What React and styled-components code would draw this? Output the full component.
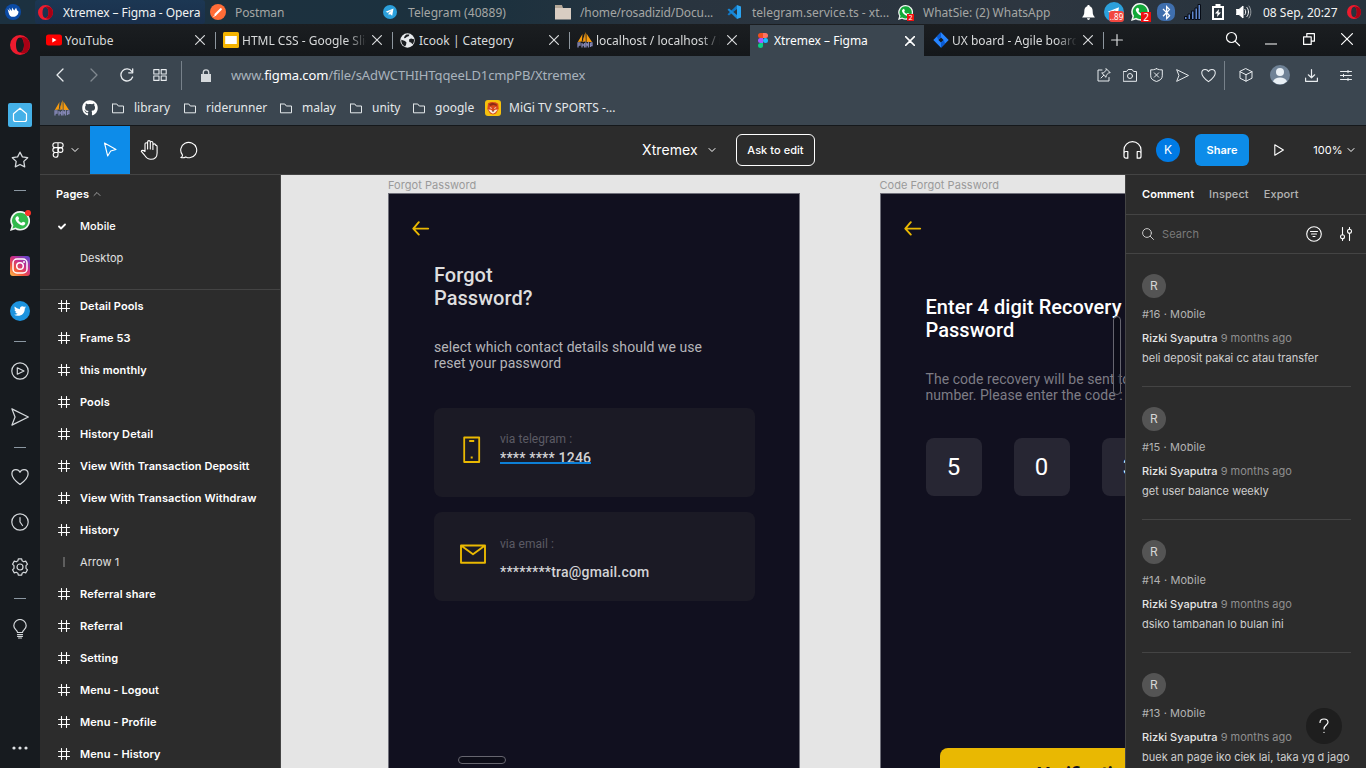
import React from 'react';
import styled, { createGlobalStyle, css } from 'styled-components';
import { FaTwitter, FaGithub, FaBluetoothB } from 'react-icons/fa';

const GlobalStyle = createGlobalStyle`
  * { box-sizing: border-box; }
  body { margin: 0; background: #171b1f; overflow: hidden; }
  svg { display: block; flex: none; }
`;

const SYSTEM_FONT = '"Noto Sans", sans-serif';
const UI_FONT = 'Inter, sans-serif';
const DESIGN_FONT = 'Roboto, sans-serif';

const Screen = styled.div`
  width: 1366px;
  height: 768px;
  display: flex;
  flex-direction: column;
  overflow: hidden;
  font-family: ${SYSTEM_FONT};
  white-space: nowrap;
`;

/* ---------- desktop task bar ---------- */

const TaskBar = styled.header`
  height: 24px;
  flex: none;
  display: flex;
  align-items: center;
  background: linear-gradient(90deg, #1c3140 0%, #1c313e 36%, #29343f 50%, #2d3640 75%, #27333d 100%);
  color: #a5a6a4;
  font-size: 12px;
`;

const StartButton = styled.div`
  width: 35px;
  padding-left: 5px;
  display: flex;
`;

const Task = styled.div`
  width: ${(p) => p.$w || 172}px;
  height: 24px;
  display: flex;
  align-items: center;
`;

const TaskInner = styled.div`
  width: 170px;
  height: 24px;
  display: flex;
  align-items: center;
  border-radius: 3px;
  background: ${(p) => (p.$active ? 'linear-gradient(#1c3753, #1a304c)' : 'transparent')};
  color: ${(p) => (p.$active ? '#f2f3f3' : 'inherit')};
`;

const TaskIcon = styled.span`
  width: 28px;
  padding-left: 3px;
  display: flex;
  flex: none;
`;

const Label = styled.span`
  letter-spacing: ${(p) => p.$track || 0}px;
  padding-bottom: ${(p) => p.$lift || 0}px;
`;

const Tray = styled.div`
  margin-left: auto;
  display: flex;
  align-items: center;
  color: #f4f4f4;
`;

const TraySlot = styled.div`
  width: 26px;
  height: 24px;
  display: flex;
  align-items: center;
  justify-content: center;
  position: relative;
  color: #fff;
`;

const CountBadge = styled.span`
  position: absolute;
  right: ${(p) => p.$right ?? 1}px;
  bottom: ${(p) => p.$bottom ?? 2}px;
  width: ${(p) => p.$w}px;
  height: ${(p) => p.$h}px;
  border-radius: ${(p) => p.$r || 0}px;
  background: ${(p) => p.$bg || '#ef1111'};
  color: #fff;
  font-size: ${(p) => p.$size || 8}px;
  line-height: ${(p) => p.$h}px;
  text-align: center;
`;

const Clock = styled.div`
  padding-left: 6px;
  width: 85px;
`;

const TrayOpera = styled.div`
  width: 24px;
  display: flex;
  justify-content: center;
`;

const RoundLogo = styled.span`
  width: ${(p) => p.$size}px;
  height: ${(p) => p.$size}px;
  border-radius: ${(p) => p.$radius || '50%'};
  background: ${(p) => p.$bg || 'none'};
  color: #fff;
  display: flex;
  align-items: center;
  justify-content: center;
  flex: none;
  position: relative;
`;

/* ---------- browser window ---------- */

const Window = styled.div`
  flex: 1;
  display: flex;
  min-height: 0;
`;

const OperaBar = styled.nav`
  width: 40px;
  flex: none;
  display: flex;
  flex-direction: column;
  align-items: center;
  background: #171b1f;
  color: #d5d9dc;
`;

const OperaItem = styled.div`
  width: 40px;
  height: ${(p) => p.$h}px;
  display: flex;
  align-items: center;
  justify-content: center;
`;

const OperaDash = styled.i`
  width: 12px;
  height: 1px;
  background: #8b97a1;
`;

const SideGap = styled.div`
  flex: 1;
`;

const HomeTile = styled.span`
  width: 24px;
  height: 24px;
  border-radius: 2px;
  background: #45b1e8;
  color: #fff;
  display: flex;
  align-items: center;
  justify-content: center;
`;

const RedDot = styled.i`
  position: absolute;
  right: -1px;
  top: -1px;
  width: 6px;
  height: 6px;
  border-radius: 50%;
  background: #fb3228;
`;

const Browser = styled.div`
  flex: 1;
  min-width: 0;
  display: flex;
  flex-direction: column;
`;

const TabStrip = styled.div`
  height: 32px;
  flex: none;
  display: flex;
  align-items: center;
  background: linear-gradient(#1b1e21, #14171a);
  color: #d8dadb;
  font-size: 12px;
`;

const Tab = styled.div`
  width: ${(p) => p.$w || 177}px;
  height: 32px;
  padding-left: ${(p) => p.$pad ?? 7}px;
  padding-right: ${(p) => p.$end ?? 10}px;
  display: flex;
  align-items: center;
  flex: none;
  background: ${(p) => (p.$active ? '#3b4650' : 'transparent')};
  color: ${(p) => (p.$active ? '#fff' : 'inherit')};
  margin-top: ${(p) => (p.$active ? 1 : 0)}px;
`;

const TabIcon = styled.span`
  width: ${(p) => p.$w || 19}px;
  display: flex;
  flex: none;
`;

const TabTitle = styled.span`
  width: 124px;
  overflow: hidden;
  flex: none;
  ${(p) => p.$fade && css`
    mask-image: linear-gradient(90deg, #000 84%, transparent 101%);
  `}
`;

const CloseSlot = styled.span`
  margin-left: auto;
  display: flex;
`;

const TabRule = styled.i`
  width: 1px;
  height: 17px;
  background: #8d969e;
  flex: none;
`;

const WindowButtons = styled.div`
  margin-left: auto;
  padding-bottom: 2px;
  display: flex;
  align-items: center;
  color: #fff;
`;

const WindowButton = styled.span`
  width: ${(p) => p.$w || 38}px;
  display: flex;
  justify-content: center;
`;

const AddressRow = styled.div`
  height: 38px;
  flex: none;
  display: flex;
  align-items: center;
  background: #3b4650;
  color: #e8ecef;
`;

const AddressIcon = styled.span`
  width: ${(p) => p.$w}px;
  display: flex;
  justify-content: center;
  opacity: ${(p) => (p.$dim ? 0.4 : 1)};
`;

const AddressRule = styled.i`
  width: 1px;
  height: 29px;
  background: #77818a;
`;

const Url = styled.div`
  padding-left: 1px;
  font-size: 13px;
  color: #a9b3bd;
  letter-spacing: -0.11px;
  b { font-weight: 400; color: #fff; }
`;

const AddressActions = styled.div`
  margin-left: auto;
  display: flex;
  align-items: center;
`;

const BookmarkRow = styled.div`
  height: 32px;
  flex: none;
  display: flex;
  align-items: center;
  padding: 0 0 4px 14px;
  background: #3b4650;
  border-bottom: 1px solid #15181b;
  color: #e4e8ea;
  font-size: 12px;
`;

const Bookmark = styled.div`
  display: flex;
  align-items: center;
  gap: ${(p) => p.$gap ?? 10}px;
  width: ${(p) => p.$w}px;
  padding-top: 1px;
`;

/* ---------- Figma ---------- */

const Figma = styled.div`
  flex: 1;
  min-height: 0;
  display: flex;
  flex-direction: column;
  font-family: ${UI_FONT};
  font-size: 11px;
  letter-spacing: 0.05px;
  color: #fff;
`;

const Toolbar = styled.div`
  height: 49px;
  flex: none;
  display: flex;
  align-items: center;
  background: #2c2c2c;
  border-bottom: 1px solid #444;
`;

const ToolSide = styled.div`
  width: 561px;
  height: 48px;
  display: flex;
  align-items: center;
`;

const Tool = styled.div`
  width: ${(p) => p.$w || 40}px;
  height: 48px;
  padding-right: ${(p) => p.$shift || 0}px;
  display: flex;
  align-items: center;
  justify-content: center;
  gap: 7px;
  background: ${(p) => (p.$active ? '#0d8ce9' : 'transparent')};
`;

const FileTitle = styled.div`
  flex: 1;
  display: flex;
  align-items: center;
  padding-left: 41px;
  font-size: 14px;
  letter-spacing: 0.1px;
`;

const TitleText = styled.span`
  width: 66px;
  padding-bottom: 2px;
`;

const AskButton = styled.button`
  width: 79px;
  height: 32px;
  margin: 0 0 0 20px;
  padding: 0;
  border: 1px solid #fff;
  border-radius: 6px;
  background: none;
  color: #fff;
  font: 500 11px ${UI_FONT};
  letter-spacing: 0.05px;
`;

const ToolbarRight = styled.div`
  display: flex;
  align-items: center;
  height: 48px;
`;

const RightSlot = styled.div`
  width: ${(p) => p.$w}px;
  display: flex;
  align-items: center;
  justify-content: center;
`;

const Avatar = styled.span`
  width: 24px;
  height: 24px;
  border-radius: 50%;
  background: ${(p) => p.$bg || '#545454'};
  color: ${(p) => (p.$bg ? '#fff' : '#d6d6d6')};
  font-size: 12px;
  line-height: 24px;
  text-align: center;
`;

const ShareButton = styled.button`
  width: 54px;
  height: 32px;
  margin: 0 0 0 15px;
  padding: 0;
  border: 0;
  border-radius: 6px;
  background: #0d8ce9;
  color: #fff;
  font: 600 11px ${UI_FONT};
`;

const Workspace = styled.div`
  flex: 1;
  min-height: 0;
  display: flex;
`;

const LeftPanel = styled.aside`
  width: 241px;
  flex: none;
  background: #2c2c2c;
  border-right: 1px solid #444;
  overflow: hidden;
`;

const PagesSection = styled.div`
  height: 115px;
  padding-top: 3px;
  border-bottom: 1px solid #444;
`;

const PagesHeader = styled.div`
  height: 32px;
  display: flex;
  align-items: center;
  gap: 4px;
  padding-left: 16px;
  font-weight: 600;
`;

const LayerRow = styled.div`
  height: 32px;
  display: flex;
  align-items: center;
  font-weight: ${(p) => p.$weight || 600};
  letter-spacing: ${(p) => (p.$weight ? 0.05 : 0.09)}px;
  color: ${(p) => (p.$soft ? '#e0e0e0' : '#fff')};
`;

const LayerIcon = styled.span`
  width: 40px;
  padding-left: 18px;
  display: flex;
`;

const ArrowMark = styled.i`
  width: 2px;
  height: 10px;
  margin-left: 5px;
  background: #5e5e5e;
`;

const Canvas = styled.main`
  flex: 1;
  position: relative;
  overflow: hidden;
  background: #e5e5e5;
`;

const Artboard = styled.section`
  position: absolute;
  left: ${(p) => p.$x}px;
  top: 4px;
  width: 412px;
  height: 700px;
  display: flex;
  flex-direction: column;
`;

const ArtboardName = styled.div`
  height: 14px;
  line-height: 13px;
  color: #9a9a9a;
`;

const Phone = styled.div`
  flex: 1;
  border: 1px solid #70707a;
  background: #11101f;
  padding: 27px 0 0 23px;
  font-family: ${DESIGN_FONT};
  letter-spacing: 0;
`;

const PhoneBody = styled.div`
  padding: ${(p) => p.$top}px 0 0 22px;
`;

const Heading = styled.h1`
  margin: 0;
  font-size: 20px;
  line-height: 23px;
  font-weight: 500;
  color: ${(p) => p.$color};
  letter-spacing: 0.04px;
`;

const Copy = styled.p`
  margin: 29px 0 0;
  font-size: 14px;
  line-height: 16px;
  color: ${(p) => p.$color};
  letter-spacing: 0.05px;
`;

const ContactCard = styled.div`
  width: 320.500px;
  height: 89px;
  margin-top: ${(p) => p.$top}px;
  padding-left: ${(p) => p.$pad}px;
  border-radius: 8px;
  background: #1b1a25;
  display: flex;
`;

const ContactIcon = styled.span`
  width: ${(p) => p.$w}px;
  padding-top: ${(p) => p.$top}px;
`;

const ContactText = styled.div`
  display: flex;
  flex-direction: column;
  align-items: flex-start;
  padding-top: ${(p) => p.$top}px;
`;

const Via = styled.span`
  font-size: 12px;
  line-height: 16px;
  color: #5b5a64;
  letter-spacing: 0.06px;
`;

const ContactValue = styled.span`
  margin-top: ${(p) => p.$gap}px;
  height: 17px;
  font-size: 14px;
  line-height: 17px;
  font-weight: 500;
  color: #d3d3d6;
  letter-spacing: 0.2px;
  ${(p) => p.$selected && css`
    line-height: 23px;
    overflow: hidden;
    border-bottom: 2px solid #0d7fd6;
  `}
`;

const DigitRow = styled.div`
  display: flex;
  gap: 32px;
  margin-top: 35px;
`;

const Digit = styled.span`
  width: 56px;
  height: 58px;
  flex: none;
  border-radius: 8px;
  background: #272633;
  color: #fff;
  font-size: 24px;
  line-height: 58px;
  text-align: center;
`;

const VerifyButton = styled.div`
  width: 292px;
  height: 48px;
  margin: 252px 0 0 14px;
  border-radius: 8px;
  background: #e9b802;
  color: #11101f;
  font-size: 18.500px;
  font-weight: 700;
  line-height: 53px;
  text-align: center;
`;

const ScrollPill = styled.i`
  position: absolute;
  left: ${(p) => p.$x}px;
  top: ${(p) => p.$y}px;
  width: ${(p) => p.$w}px;
  height: ${(p) => p.$h}px;
  border: 1px solid #66656f;
  border-radius: 4px;
  background: rgba(10, 9, 18, 0.5);
`;

const RightPanel = styled.aside`
  width: 241px;
  flex: none;
  background: #2c2c2c;
  border-left: 1px solid #444;
  overflow: hidden;
  position: relative;
`;

const PanelTabs = styled.div`
  height: 40px;
  display: flex;
  align-items: center;
  gap: 15px;
  padding: 0 0 2px 16px;
  border-bottom: 1px solid #444;
  color: #b3b3b3;
  font-weight: 500;
  letter-spacing: 0.1px;
  b { font-weight: 600; color: #fff; letter-spacing: 0.05px; }
`;

const SearchRow = styled.div`
  height: 39px;
  display: flex;
  align-items: center;
  padding: 0 14px 0 16px;
  border-bottom: 1px solid #444;
`;

const SearchHint = styled.span`
  flex: 1;
  padding-left: 8px;
  color: #7a7a7a;
  letter-spacing: 0.1px;
`;

const SearchTools = styled.span`
  display: flex;
  align-items: center;
  gap: 18px;
`;

const Comment = styled.article`
  height: 133px;
  margin: 0 15px 0 16px;
  padding-top: 20px;
  border-bottom: 1px solid #444;
  display: flex;
  flex-direction: column;
  color: #b3b3b3;
`;

const CommentRef = styled.div`
  margin-top: 8px;
  line-height: 16px;
  letter-spacing: 0.08px;
`;

const CommentBy = styled.div`
  margin-top: 8px;
  line-height: 16px;
  color: #8f8f8f;
  letter-spacing: 0;
  b { font-weight: 500; color: #e6e6e6; letter-spacing: 0.03px; }
`;

const CommentText = styled.div`
  margin-top: 4px;
  line-height: 16px;
  color: #cfcfcf;
  letter-spacing: 0.01px;
`;

const HelpButton = styled.span`
  position: absolute;
  right: 24px;
  bottom: 24px;
  width: 36px;
  height: 36px;
  border-radius: 50%;
  background: #1e1e1e;
  display: flex;
  align-items: center;
  justify-content: center;
`;

/* ---------- icons ---------- */

const Icon = ({ w = 16, h = w, sw = 1, children }) => (
  <svg width={w} height={h} viewBox={`0 0 ${w} ${h}`} fill="none" stroke="currentColor" strokeWidth={sw} strokeLinecap="round" strokeLinejoin="round">
    {children}
  </svg>
);

const OperaLogo = ({ size }) => (
  <svg width={size} height={size} viewBox="0 0 20 20">
    <path fillRule="evenodd" fill="#ee1b2e" d="M10 0a10 10 0 1 0 0 20 10 10 0 0 0 0-20Zm0 2.600c2.500 0 4 3.200 4 7.400s-1.500 7.400-4 7.400S6 14.200 6 10s1.500-7.400 4-7.400Z" />
    <path fill="#a70014" d="M10 2.600c3.500-1.600 6.200.2 7.500 1.500C21 8 20.500 13 17 17c-2 1.700-5 2-7 .4 2.500 0 4-3.200 4-7.400s-1.500-7.400-4-7.400Z" />
  </svg>
);

const MouseLogo = () => (
  <svg width="16" height="16" viewBox="0 0 16 16">
    <circle cx="8" cy="8" r="8" fill="#0b4ba5" />
    <path fill="#fff" d="M2.600 5 4.800 7.200 4.300 4l2.500 3L7 3.600l2.200 2.800 1.900-2.600 1 2.700c1.600.3 1.800 1.800.8 3.700-1.600 2.600-5.400 3.400-7.700 1.700C3.900 10.800 3.400 7.800 2.600 5Z" />
  </svg>
);

const PostmanLogo = () => (
  <Icon w={16}>
    <circle cx="8" cy="8" r="8" fill="#ff6c37" stroke="none" />
    <path d="m5.500 10.500 5.300-5.300" stroke="#fff" strokeWidth="2.200" />
    <path d="m3.800 12.300 2-1" stroke="#fff" />
  </Icon>
);

const TelegramLogo = ({ size = 14 }) => (
  <svg width={size} height={size} viewBox="0 0 16 16">
    <circle cx="8" cy="8" r="8" fill="#2ba0dc" />
    <path fill="#fff" d="m3 7.800 9-3.700-1.500 8.200-2.600-1.900-1.300 1.300-.3-2.300 3.500-3.300-4.400 2.700Z" />
  </svg>
);

const FolderLogo = () => (
  <svg width="16" height="16" viewBox="0 0 16 16">
    <path fill="#b5a898" d="M0 1h7l1 3H0Z" />
    <path fill="#d9cdc2" d="M0 4h16v11.500H0Z" />
  </svg>
);

const CodeLogo = () => (
  <svg width="14" height="14" viewBox="0 0 14 14">
    <path fill="#1177c4" d="M10 0v4L2 10.500.5 9.300 10 0Z" />
    <path fill="#1888d8" d="M10 14v-4L2 3.500.5 4.700 10 14Z" />
    <path fill="#2aa4f2" d="m10 0 4 1.500v11L10 14Z" />
  </svg>
);

const WhatsLogo = ({ size = 16, green = '#12a838' }) => (
  <svg width={size} height={size} viewBox="0 0 20 20">
    <path fill="#f1f5f2" d="M10.200 0A9.800 9.800 0 1 1 5.400 18.300L0 19.900l1.600-5.200A9.800 9.800 0 0 1 10.200 0Z" />
    <path fill={green} d="M10.200 1.700a8.100 8.100 0 1 1-4.500 14.800l-3.200.9.900-3.100a8.100 8.100 0 0 1 6.800-12.600Z" />
    <path fill="#fff" d="M7.300 5.200c.5-.1.900 0 1.100.6l.7 1.600c.1.600-.8 1.200-.8 1.500.8 1.500 1.800 2.300 3.300 2.900.5 0 .9-1.300 1.500-1.100l1.900.9c.4.300.2 1.500-.2 2-1.300 1.300-3 .9-4.700.1-2-1-3.600-2.800-4.500-4.700-.7-1.600.2-3.400 1.700-3.800Z" />
  </svg>
);

const YoutubeLogo = () => (
  <svg width="16" height="16" viewBox="0 0 16 16">
    <rect y="2.500" width="16" height="11" rx="2.500" fill="#f00" />
    <path fill="#fff" d="m6.300 5.700 4.200 2.300-4.200 2.400Z" />
  </svg>
);

const SlidesLogo = () => (
  <svg width="16" height="16" viewBox="0 0 16 16">
    <rect width="16" height="16" rx="1.500" fill="#f5b400" />
    <rect x="2.200" y="4" width="11.600" height="8" fill="#fff" />
  </svg>
);

const GlobeLogo = () => (
  <svg width="15" height="15" viewBox="0 0 15 15">
    <circle cx="7.500" cy="7.500" r="7.200" fill="#e8eaed" />
    <path fill="#1b1e21" d="M1.300 6.700 5 8l1.500 1.500L6 12l-1 1.500C2.300 12.300 1 9.500 1.300 6.700ZM6.500 1.500l2.800-.1c-.1 1.400-1 2.200-2.300 2.300L5.500 5 4 5.200c.3-1.700 1-3 2.500-3.700ZM9 6.500l2-1 3 .8c.2 2-.3 3.700-1.500 5L11 9.500 9.300 9Z" />
  </svg>
);

const SailLogo = () => (
  <svg width="16" height="16" viewBox="0 0 16 16">
    <path fill="#f89c0e" d="M5.500 2 4.800 9.500.8 10Zm3-2 .3 9.500-3.300.3Zm1 1.500L15 10H9.500Z" />
    <path fill="#c9821d" d="m8.500 0-3 9.800 1.300-.1Z" />
    <path stroke="#8486b4" strokeWidth="1.300" fill="none" d="M1 15.500V11h2v2H1m4-2v4.500m2.500-4.500v4.500M5 13h2.500m1.500 2.500V11l1.200 2 1.200-2v4.500M13.500 11v4m0-4H15v2.500h-1.500" />
  </svg>
);

const FigmaLogo = () => (
  <svg width="10" height="15" viewBox="0 0 10 15">
    <path fill="#f24e1e" d="M5 0H2.500a2.500 2.500 0 0 0 0 5H5Z" />
    <path fill="#ff7262" d="M5 0h2.500a2.500 2.500 0 0 1 0 5H5Z" />
    <path fill="#a259ff" d="M5 5H2.500a2.500 2.500 0 0 0 0 5H5Z" />
    <circle cx="7.500" cy="7.500" r="2.500" fill="#1abcfe" />
    <path fill="#0acf83" d="M5 10H2.500A2.500 2.500 0 1 0 5 12.500Z" />
  </svg>
);

const JiraLogo = () => (
  <svg width="16" height="16" viewBox="0 0 16 16">
    <path fill="#2684ff" fillRule="evenodd" d="m8 .3 7.700 7.700L8 15.700.3 8ZM8 5.400 5.400 8 8 10.600 10.600 8Z" />
    <path fill="#0a5bd3" d="M8 .3v5.100L5.400 8 3.800 4.500ZM8 15.700v-5.100L10.600 8l1.600 3.500Z" />
  </svg>
);

const FoxLogo = () => (
  <svg width="16" height="16" viewBox="0 0 16 16">
    <rect width="16" height="16" rx="3" fill="#f6c10d" />
    <path fill="#d9481c" d="M3 3.200 6 2l4.500.2 2.700 1.500.5 5L11 13.500 8 14.500l-3-1L2.300 9Z" />
    <path fill="#8c2a14" d="m4 4 3.500-1.200L11.500 4 12 6 8.500 5 5 6Z" />
    <path fill="#fbe9d6" d="m3.200 9.500 2.500.2L8 11.200l2.300-1.500 2.500-.2-2.500 3L8 13.800l-2.300-1.300Z" />
    <path fill="#fff" d="m4.500 7 2.300 1-.6.9Zm7 0L9.200 8l.6.900Z" />
    <path fill="#3c1b12" d="M7 10.800h2l-1 1.200Z" />
  </svg>
);

const InstagramLogo = () => (
  <svg width="20" height="20" viewBox="0 0 20 20">
    <defs>
      <linearGradient id="insta" x1="0" y1="1" x2=".8" y2="0">
        <stop offset="0" stopColor="#fdc14d" /><stop offset=".35" stopColor="#f0543c" />
        <stop offset=".65" stopColor="#c92f8b" /><stop offset="1" stopColor="#6a45c9" />
      </linearGradient>
    </defs>
    <rect width="20" height="20" rx="3" fill="url(#insta)" />
    <rect x="3" y="3" width="14" height="14" rx="4" fill="none" stroke="#fff" strokeWidth="1.500" />
    <circle cx="10" cy="10" r="3.300" fill="none" stroke="#fff" strokeWidth="1.500" />
    <circle cx="14" cy="6" r="1" fill="#fff" />
  </svg>
);

const Cross = ({ size = 10, sw = 1.2 }) => (
  <Icon w={size} sw={sw}><path d={`M.6.6 ${size - 0.6} ${size - 0.6}M${size - 0.6} .6 .6 ${size - 0.6}`} /></Icon>
);

const Heart = ({ w = 16, sw = 1.1 }) => (
  <svg width={w} height={w} viewBox="0 0 16 16" fill="none" stroke="currentColor" strokeWidth={sw} strokeLinejoin="round">
    <path d="M8 14.600C3.500 11.300.8 8.500.8 5.300.8 3 2.400 1.500 4.400 1.500 6 1.500 7.300 2.300 8 3.800c.7-1.500 2-2.300 3.600-2.300 2 0 3.600 1.500 3.600 3.800 0 3.200-2.700 6-7.200 9.300Z" />
  </svg>
);

const SendIcon = ({ w = 14, sw = 1.1 }) => (
  <svg width={w} height={w} viewBox="0 0 16 16" fill="none" stroke="currentColor" strokeWidth={sw} strokeLinejoin="round">
    <path d="M.8.800 15.400 8 .8 15.200 3.600 8Z" />
  </svg>
);

const BookmarkFolder = () => (
  <Icon w={12} h={11}><path d="M.5 1.500v8.300h11V3H6.300L4.800 1H.5Z" /></Icon>
);

const ChevronDown = () => <Icon w={8} h={6}><path d="m1 1.500 3 3 3-3" /></Icon>;

const FrameIcon = () => (
  <Icon w={12} sw={1.1}><path d="M3.500.5v11m5-11v11M.5 3.500h11m-11 5h11" /></Icon>
);

const BackArrow = () => (
  <svg width="18" height="16" viewBox="0 0 18 16" fill="none" stroke="#e9b802" strokeWidth="1.900" strokeLinecap="round" strokeLinejoin="round">
    <path d="M16.200 7.600H1.500M6.800 1.200 1.300 7.600l5.500 6" />
  </svg>
);

/* ---------- data ---------- */

const TASKS = [
  { text: 'Xtremex – Figma - Opera', icon: <OperaLogo size={15} />, active: true, track: -0.07 },
  { text: 'Postman', icon: <PostmanLogo />, track: -0.1, w: 173 },
  { text: 'Telegram (40889)', icon: <TelegramLogo />, track: 0.05 },
  { text: '/home/rosadizid/Docu...', icon: <FolderLogo />, track: -0.12 },
  { text: 'telegram.service.ts - xt...', icon: <CodeLogo />, w: 171 },
];

const TABS = [
  { text: 'YouTube', icon: <YoutubeLogo />, w: 175, pad: 6 },
  { text: 'HTML CSS - Google Slides', icon: <SlidesLogo />, fade: true, w: 176 },
  { text: 'Icook | Category', icon: <GlobeLogo />, w: 176 },
  { text: 'localhost / localhost / internal', icon: <SailLogo />, fade: true, w: 180, end: 13 },
];

const BOOKMARKS = [
  ['library', 72], ['riderunner', 96], ['malay', 70], ['unity', 63], ['google', 72],
];

const LAYERS = [
  'Detail Pools', 'Frame 53', 'this monthly', 'Pools', 'History Detail',
  'View With Transaction Depositt', 'View With Transaction Withdraw', 'History',
  null, 'Referral share', 'Referral', 'Setting', 'Menu - Logout', 'Menu - Profile', 'Menu - History',
];

const COMMENTS = [
  [16, 'beli deposit pakai cc atau transfer'],
  [15, 'get user balance weekly'],
  [14, 'dsiko tambahan lo bulan ini'],
  [13, 'buek an page iko ciek lai, taka yg d jago'],
];

const SIDE_ITEMS = [
  [42, <OperaLogo size={20} />],
  [27, null],
  [44, <HomeTile><Icon w={16} sw={1.2}><path d="M1.500 6.800 8 1.200l6.500 5.600v5.700q0 2-2 2h-9q-2 0-2-2Z" /></Icon></HomeTile>],
  [46, <Icon w={18} sw={1.3}><path d="m9 1.200 2.400 4.700 5.300.8-3.900 3.700.9 5.400L9 13.500l-4.700 2.300.9-5.400-3.900-3.700 5.300-.8Z" /></Icon>],
  [14, <OperaDash />],
  [48, <RoundLogo $size={20}><WhatsLogo size={20} green="#32b94c" /><RedDot /></RoundLogo>],
  [42, <InstagramLogo />],
  [48, <RoundLogo $size={20} $bg="#1c93de"><FaTwitter size={12} /></RoundLogo>],
  [12, <OperaDash />],
  [48, <Icon w={18} sw={1.2}><circle cx="9" cy="9" r="8.200" /><path d="M6.300 5.800v6.400L13 9Z" /></Icon>],
  [44, <SendIcon w={18} />],
  [16, <OperaDash />],
  [44, <Heart w={18} />],
  [46, <Icon w={18} sw={1.2}><circle cx="9" cy="9" r="8.200" /><path d="M9 4.500V9l2.500 3.500" /></Icon>],
  [44, <Icon w={18} sw={1.2}><path d="m7.300.8-.4 2-1.600 1-2-.7L1.500 6.200 3 7.700v2.600l-1.500 1.500 1.800 3.100 2-.7 1.600 1 .4 2h3.400l.4-2 1.600-1 2 .7 1.800-3.100-1.500-1.500V7.700l1.500-1.500-1.800-3.100-2 .7-1.600-1-.4-2Z" /><circle cx="9" cy="9" r="3" /></Icon>],
  [18, <OperaDash />],
  [44, <Icon w={14} h={20} sw={1.2}><path d="M4.500 13.500C4.500 11 .8 10.500.8 6.700a6.200 6.200 0 0 1 12.400 0c0 3.800-3.700 4.300-3.700 6.800ZM4.500 15.500h5M4.500 17.300h5M5.500 19h3" /></Icon>],
];

/* ---------- sections ---------- */

const DesktopBar = () => (
  <TaskBar>
    <StartButton><MouseLogo /></StartButton>
    {TASKS.map((t) => (
      <Task key={t.text} $w={t.w}>
        <TaskInner $active={t.active}><TaskIcon>{t.icon}</TaskIcon><Label $track={t.track}>{t.text}</Label></TaskInner>
      </Task>
    ))}
    <Task>
      <TaskIcon>
        <RoundLogo $size={15}><WhatsLogo size={15} /><CountBadge $w={7} $h={7} $right={-1} $bottom={-1} $size={7}>2</CountBadge></RoundLogo>
      </TaskIcon>
      <Label>WhatSie: (2) WhatsApp</Label>
    </Task>
    <Tray>
      <TraySlot>
        <svg width="13" height="15" viewBox="0 0 13 15"><path fill="#fff" d="M6.500 0c.8 0 1.200.5 1.200 1.200C10 2 10.700 3.800 10.700 6.500c0 3 .7 4 2 5.500v.6H.3V12c1.300-1.500 2-2.500 2-5.500 0-2.700.7-4.500 3-5.300C5.300.5 5.700 0 6.500 0ZM5 13.300h3c-.2 2.200-2.800 2.200-3 0Z" /></svg>
      </TraySlot>
      <TraySlot><TelegramLogo size={20} /><CountBadge $w={15} $h={11} $r={3} $bg="#f2473f" $right={3} $bottom={2}>..89</CountBadge></TraySlot>
      <TraySlot><WhatsLogo size={18} /><CountBadge $w={10} $h={10} $size={10} $right={2} $bottom={2}>2</CountBadge></TraySlot>
      <TraySlot><RoundLogo $size={18} $radius="7px" $bg="#3f6fae"><FaBluetoothB size={15} /></RoundLogo></TraySlot>
      <TraySlot>
        <svg width="17" height="16" viewBox="0 0 17 16" fill="#5f86cc" stroke="#060b14" strokeWidth="1">
          <path d="M.5 12.500H3v3H.5ZM4 10h2.500v5.500H4ZM7.500 7H10v8.500H7.500ZM11 4h2.500v11.500H11ZM14 .5h2.500v15H14Z" />
        </svg>
      </TraySlot>
      <TraySlot>
        <svg width="12" height="16" viewBox="0 0 12 16"><path fill="none" stroke="#fff" strokeWidth="2" d="M1 3h10v12H1Z" /><path fill="#fff" d="M3.500 0h5v3h-5ZM7 5l-4 4.500h2.500L5 13l4-4.500H6.500Z" /></svg>
      </TraySlot>
      <TraySlot>
        <Icon w={16} h={14}><path d="M.5 4.500H3L7 1v12L3 9.500H.5Z" fill="#fff" /><path d="M9 4.500c1 1.500 1 3.500 0 5M11 2.500c2 2.500 2 6.500 0 9" /><path d="M13 1c2.500 3.500 2.500 8.500 0 12" opacity=".5" /></Icon>
      </TraySlot>
      <Clock>08 Sep, 20:27</Clock>
      <TrayOpera><OperaLogo size={14} /></TrayOpera>
    </Tray>
  </TaskBar>
);

const Sidebar = () => (
  <OperaBar>
    {SIDE_ITEMS.map(([h, node], i) => <OperaItem key={i} $h={h}>{node}</OperaItem>)}
    <SideGap />
    <OperaItem $h={40}>
      <svg width="16" height="4" viewBox="0 0 16 4" fill="#dfe2e4"><circle cx="2" cy="2" r="1.600" /><circle cx="8" cy="2" r="1.600" /><circle cx="14" cy="2" r="1.600" /></svg>
    </OperaItem>
  </OperaBar>
);

const BrowserTabs = () => (
  <TabStrip>
    {TABS.map((t, i) => (
      <React.Fragment key={t.text}>
        <Tab $w={t.w} $pad={t.pad} $end={t.end}>
          <TabIcon>{t.icon}</TabIcon>
          <TabTitle $fade={t.fade}>{t.text}</TabTitle>
          <CloseSlot><Cross /></CloseSlot>
        </Tab>
        {i < 3 && <TabRule />}
      </React.Fragment>
    ))}
    <Tab $w={174} $active $pad={8} $end={9}>
      <TabIcon $w={16}><FigmaLogo /></TabIcon>
      <TabTitle>Xtremex – Figma</TabTitle>
      <CloseSlot><Cross sw={1.5} /></CloseSlot>
    </Tab>
    <Tab $w={179} $pad={9}>
      <TabIcon><JiraLogo /></TabIcon>
      <TabTitle $fade>UX board - Agile board - Jira</TabTitle>
      <CloseSlot><Cross /></CloseSlot>
    </Tab>
    <TabRule />
    <WindowButton $w={26}><Icon w={12} sw={1.2}><path d="M6 .6v10.800M.6 6h10.800" /></Icon></WindowButton>
    <WindowButtons>
      <WindowButton><Icon w={16} sw={1.2}><circle cx="6.500" cy="6.500" r="5" /><path d="m10.300 10.300 4.200 4.200" /></Icon></WindowButton>
      <WindowButton><Icon w={12} h={12} sw={1.2}><path d="M.5 11h11" /></Icon></WindowButton>
      <WindowButton><Icon w={12} sw={1.2}><path d="M.6 3.800h7.600v7.600H.6ZM3.800 3.500V.6h7.600v7.600H8.500" /></Icon></WindowButton>
      <WindowButton><Cross size={12} /></WindowButton>
    </WindowButtons>
  </TabStrip>
);

const AddressBar = () => (
  <AddressRow>
    <AddressIcon $w={40}><Icon w={8} h={14} sw={1.3}><path d="M7 1 1 7l6 6" /></Icon></AddressIcon>
    <AddressIcon $w={27} $dim><Icon w={8} h={14} sw={1.3}><path d="m1 1 6 6-6 6" /></Icon></AddressIcon>
    <AddressIcon $w={39}><Icon w={14} sw={1.3}><path d="M12.600 9A6 6 0 1 1 11.800 3.400M12.700.8v4H8.700" /></Icon></AddressIcon>
    <AddressIcon $w={27}><Icon w={14} h={12} sw={1.1}><path d="M.8.6H6V5H.8ZM8.200.6h5V5h-5ZM.8 7H6v4.400H.8ZM8.200 7h5v4.400h-5Z" /></Icon></AddressIcon>
    <AddressIcon $w={8} />
    <AddressRule />
    <AddressIcon $w={48}>
      <svg width="10" height="13" viewBox="0 0 10 13"><path fill="#d5d9dc" d="M0 5h10v8H0Z" /><path d="M2.300 5V3.500a2.700 2.700 0 0 1 5.400 0V5" fill="none" stroke="#d5d9dc" strokeWidth="1.300" /></svg>
    </AddressIcon>
    <Url>www.<b>figma.com</b>/file/sAdWCTHIHTqqeeLD1cmpPB/Xtremex</Url>
    <AddressActions>
      <AddressIcon $w={26}><Icon w={14} h={14}><path d="M5 2H1v11h11V9.500M9.300.8l3.900 3.900-1.500.2-2.500 2.400-.2 2L4.700 5l2-.2 2.400-2.500ZM6.800 7.200 4 10" /></Icon></AddressIcon>
      <AddressIcon $w={26}><Icon w={14} h={13}><path d="M.6 2.500h3l1.500-2h4l1.500 2h2.900v9.800H.6Z" /><circle cx="7" cy="7" r="2.500" /></Icon></AddressIcon>
      <AddressIcon $w={26}><Icon w={13} h={14}><path d="M6.500.7c2 1 4 1.300 5.800 1.100v6c0 3-2 4.500-5.800 5.700C2.700 12.300.7 10.800.7 7.800v-6c1.800.2 3.800-.1 5.800-1.100ZM4.300 4.800l4.400 4.400m0-4.400L4.300 9.200" /></Icon></AddressIcon>
      <AddressIcon $w={26}><SendIcon w={13} sw={1.2} /></AddressIcon>
      <AddressIcon $w={26}><Heart w={15} /></AddressIcon>
      <AddressIcon $w={3} />
      <AddressRule />
      <AddressIcon $w={41}><Icon w={14} h={14}><path d="m7 .7 6 3v6.500l-6 3-6-3V3.700ZM1 3.700l6 3 6-3M7 6.700v6.500" /></Icon></AddressIcon>
      <AddressIcon $w={27}>
        <svg width="20" height="20" viewBox="0 0 20 20"><circle cx="10" cy="10" r="10" fill="#6f8296" /><circle cx="10" cy="7" r="4" fill="#e9f0f5" /><path fill="#e9f0f5" d="M3 16.500c1.500-5.300 12.500-5.300 14 0a10 10 0 0 1-14 0Z" /></svg>
      </AddressIcon>
      <AddressIcon $w={37}><Icon w={13} sw={1.2}><path d="M6.500.6v8M3.300 5.800l3.200 3 3.200-3M.6 9v3.300h11.800V9" /></Icon></AddressIcon>
      <AddressIcon $w={31}><Icon w={12} h={11}><path d="M.5 1.500h11M.5 5.500h11M.5 9.500h11M8 .3v2.400M3.500 4.300v2.400M8 8.300v2.400" /></Icon></AddressIcon>
      <AddressIcon $w={5} />
    </AddressActions>
  </AddressRow>
);

const BookmarkBar = () => (
  <BookmarkRow>
    <Bookmark $w={28}><SailLogo /></Bookmark>
    <Bookmark $w={30}><FaGithub size={16} color="#fff" /></Bookmark>
    {BOOKMARKS.map(([name, w]) => <Bookmark key={name} $w={w}><BookmarkFolder /><Label $lift={2}>{name}</Label></Bookmark>)}
    <Bookmark $gap={8}><FoxLogo /><Label $lift={2}>MiGi TV SPORTS -...</Label></Bookmark>
  </BookmarkRow>
);

const FigmaToolbar = () => (
  <Toolbar>
    <ToolSide>
      <Tool $w={50}>
        <Icon w={12} h={16} sw={1.1}><path d="M6 .7H3.300a2.400 2.400 0 0 0 0 4.900H6ZM6 .7h2.700a2.400 2.400 0 0 1 0 4.900H6ZM6 5.600H3.300a2.400 2.400 0 0 0 0 4.900H6ZM6 10.500H3.300A2.400 2.400 0 1 0 6 12.900Z" /><circle cx="8.500" cy="8" r="2.400" /></Icon>
        <ChevronDown />
      </Tool>
      <Tool $active><Icon w={14} h={16} sw={1.1}><path d="m1.500 1 11.500 6.500-5.300 1.500L4.700 14Z" /></Icon></Tool>
      <Tool $shift={2}><Icon w={18} h={20} sw={1.1}><path d="M5 11.500V4a1.300 1.300 0 0 1 2.600 0v5V2a1.300 1.300 0 0 1 2.700 0v7V2.800a1.300 1.300 0 0 1 2.600 0V9.500V5.300a1.300 1.300 0 0 1 2.700-.2q1.500 0 1.500 1.400v6.500c0 4-2 6.300-6.300 6.300-4 0-5-2.300-6.500-4.500l-3-3.500c.5-1.500 2-1 3.700.2Z" /></Icon></Tool>
      <Tool $shift={2}><Icon w={18} sw={1.1}><path d="M.8 16.500c1.500-.5 1.800-1.500 1.600-2.600A8 7.700 0 1 1 9.700 16.800c-1.500 0-2.800-.3-3.900-.9-1.500.8-3 1-5 .6Z" /></Icon></Tool>
    </ToolSide>
    <FileTitle><TitleText>Xtremex</TitleText><ChevronDown /><AskButton>Ask to edit</AskButton></FileTitle>
    <ToolbarRight>
      <RightSlot $w={48}><Icon w={19} h={18} sw={1.2}><path d="M1 14V9a8.500 8.300 0 0 1 17 0v5M1 12.500c0-1.300.8-2 2-2h1.800v6.700H3c-1.200 0-2-.7-2-2ZM18 12.500c0-1.300-.8-2-2-2h-1.800v6.700H16c1.200 0 2-.7 2-2Z" /></Icon></RightSlot>
      <Avatar $bg="#007be5">K</Avatar>
      <ShareButton>Share</ShareButton>
      <RightSlot $w={60}><Icon w={10} h={12} sw={1.1}><path d="M.8.800 9.400 6 .8 11.200Z" /></Icon></RightSlot>
      <RightSlot $w={38}>100%</RightSlot>
      <ChevronDown />
      <RightSlot $w={11} />
    </ToolbarRight>
  </Toolbar>
);

const Layers = () => (
  <LeftPanel>
    <PagesSection>
      <PagesHeader>Pages<Icon w={8} h={6} sw={0.9}><path d="m1 4.500 3-3 3 3" opacity=".6" /></Icon></PagesHeader>
      <LayerRow $weight={500}>
        <LayerIcon><Icon w={8} h={7} sw={1.8}><path d="m1 3.500 2 2 4-4" /></Icon></LayerIcon>Mobile
      </LayerRow>
      <LayerRow $weight={400} $soft><LayerIcon />Desktop</LayerRow>
    </PagesSection>
    {LAYERS.map((name) => name
      ? <LayerRow key={name}><LayerIcon><FrameIcon /></LayerIcon>{name}</LayerRow>
      : <LayerRow key="arrow" $weight={400} $soft><LayerIcon><ArrowMark /></LayerIcon>Arrow 1</LayerRow>)}
  </LeftPanel>
);

const Artwork = () => (
  <Canvas>
    <Artboard $x={107}>
      <ArtboardName>Forgot Password</ArtboardName>
      <Phone>
        <BackArrow />
        <PhoneBody $top={27}>
          <Heading $color="#dedede">Forgot<br />Password?</Heading>
          <Copy $color="#b5b5b9">select which contact details should we use<br />reset your password</Copy>
          <ContactCard $top={37} $pad={28}>
            <ContactIcon $w={38} $top={28}>
              <svg width="19" height="28" viewBox="0 0 19 28" fill="none" stroke="#e9b802" strokeWidth="1.800" strokeLinejoin="round"><path d="M2.200 1.500h15v24.500h-15Z" /><path d="M7.200 5h5M8.700 21.500h2" /></svg>
            </ContactIcon>
            <ContactText $top={23}><Via>via telegram :</Via><ContactValue $gap={0} $selected>**** **** 1246</ContactValue></ContactText>
          </ContactCard>
          <ContactCard $top={15} $pad={26}>
            <ContactIcon $w={40} $top={32}>
              <svg width="26" height="20" viewBox="0 0 26 20" fill="none" stroke="#e9b802" strokeWidth="1.900" strokeLinejoin="round"><path d="M1 1.500h24v17.300H1ZM1 1.500l12 8.800 12-8.800" /></svg>
            </ContactIcon>
            <ContactText $top={24}><Via>via email :</Via><ContactValue $gap={12}>********tra@gmail.com</ContactValue></ContactText>
          </ContactCard>
        </PhoneBody>
      </Phone>
    </Artboard>
    <Artboard $x={598.5}>
      <ArtboardName>Code Forgot Password</ArtboardName>
      <Phone>
        <BackArrow />
        <PhoneBody $top={59}>
          <Heading $color="#fff">Enter 4 digit Recovery<br />Password</Heading>
          <Copy $color="#7d7c85">The code recovery will be sent to your<br />number. Please enter the code :</Copy>
          <DigitRow><Digit>5</Digit><Digit>0</Digit><Digit>3</Digit></DigitRow>
          <VerifyButton>Verification</VerifyButton>
        </PhoneBody>
      </Phone>
    </Artboard>
    <ScrollPill $x={177} $y={581} $w={48} $h={8} />
    <ScrollPill $x={832} $y={141} $w={8} $h={79} />
  </Canvas>
);

const CommentsPanel = () => (
  <RightPanel>
    <PanelTabs><b>Comment</b><span>Inspect</span><span>Export</span></PanelTabs>
    <SearchRow>
      <Icon w={12}><circle cx="5" cy="5" r="4.400" stroke="#c8c8c8" /><path d="m8.300 8.300 3.200 3.200" stroke="#c8c8c8" /></Icon>
      <SearchHint>Search</SearchHint>
      <SearchTools>
        <Icon w={16} sw={1.1}><circle cx="8" cy="8" r="7.300" /><path d="M4.500 5.500h7M5.500 8h5M7 10.500h2" /></Icon>
        <Icon w={12} h={14} sw={1.1}><path d="M2.500.5v7.200M2.500 11.700v1.800M9.500.5v1.800M9.500 6.300v7.200" /><circle cx="2.500" cy="9.700" r="2" /><circle cx="9.500" cy="4.300" r="2" /></Icon>
      </SearchTools>
    </SearchRow>
    {COMMENTS.map(([id, text]) => (
      <Comment key={id}>
        <Avatar>R</Avatar>
        <CommentRef>#{id} · Mobile</CommentRef>
        <CommentBy><b>Rizki Syaputra</b> 9 months ago</CommentBy>
        <CommentText>{text}</CommentText>
      </Comment>
    ))}
    <HelpButton><Icon w={10} h={16} sw={1.2}><path d="M1 4.500C1 2.300 2.500 1 5 1s4 1.500 4 3.300C9 7 5 7.200 5 11M5 14.300v.2" /></Icon></HelpButton>
  </RightPanel>
);

export default function App() {
  return (
    <>
      <GlobalStyle />
      <Screen>
        <DesktopBar />
        <Window>
          <Sidebar />
          <Browser>
            <BrowserTabs />
            <AddressBar />
            <BookmarkBar />
            <Figma>
              <FigmaToolbar />
              <Workspace>
                <Layers />
                <Artwork />
                <CommentsPanel />
              </Workspace>
            </Figma>
          </Browser>
        </Window>
      </Screen>
    </>
  );
}
